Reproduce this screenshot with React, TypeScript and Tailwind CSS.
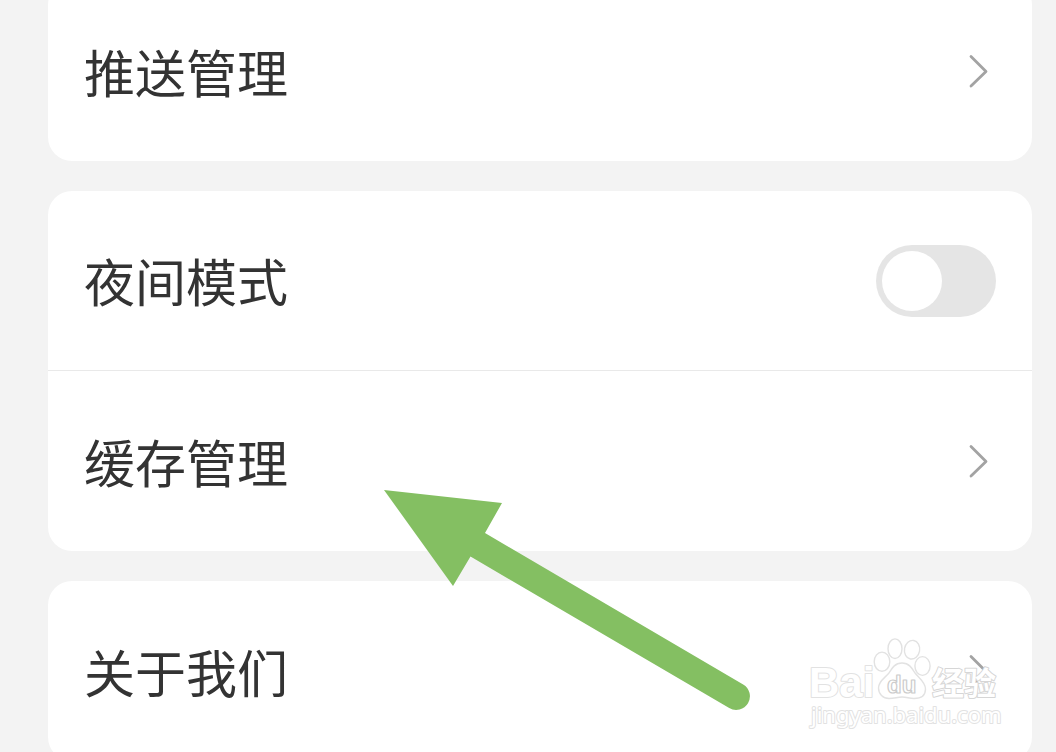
import React, { useId, useState } from "react";

function Chevron() {
  return (
    <svg className="mr-2 h-9 w-5 shrink-0" viewBox="0 0 20 36" fill="none" aria-hidden="true">
      <path
        d="M3 3.5 L18 18.5 L3 33"
        stroke="#a3a3a3"
        strokeWidth="2.8"
        strokeLinecap="round"
        strokeLinejoin="round"
      />
    </svg>
  );
}

function Card({ children }: { children: React.ReactNode }) {
  return (
    <section className="divide-y divide-[#e9e9e9] overflow-hidden rounded-3xl bg-white">{children}</section>
  );
}

function LinkRow({ label }: { label: string }) {
  return (
    <a href="#" className="flex h-[180px] items-center justify-between px-9">
      <span>{label}</span>
      <Chevron />
    </a>
  );
}

function SwitchRow({ label }: { label: string }) {
  const id = useId();
  const [on, setOn] = useState(false);
  return (
    <div className="flex h-[180px] items-center justify-between px-9">
      <label htmlFor={id}>{label}</label>
      <input
        id={id}
        type="checkbox"
        role="switch"
        checked={on}
        onChange={(e) => setOn(e.target.checked)}
        className="flex h-[72px] w-[120px] shrink-0 appearance-none items-center rounded-full bg-[#e5e5e5] px-1.5 before:h-[60px] before:w-[60px] before:rounded-full before:bg-white checked:justify-end checked:bg-[#84bf62]"
      />
    </div>
  );
}

function Pointer() {
  return (
    <svg
      className="pointer-events-none absolute left-[380px] top-[480px] h-[240px] w-[380px]"
      viewBox="380 480 380 240"
      aria-hidden="true"
    >
      <path
        d="M384 490 L502 503 L485 533 L743.2 684.4 A13.7 13.7 0 0 1 729.2 708 L470.5 556.5 L453 586 Z"
        fill="#84bf62"
      />
    </svg>
  );
}

function Watermark() {
  return (
    <svg
      className="pointer-events-none absolute bottom-4 right-12 h-[104px] w-[208px]"
      viewBox="800 632 208 104"
      fill="#ffffff"
      stroke="#e2e2e2"
      strokeLinejoin="round"
      aria-hidden="true"
    >
      <g strokeWidth="1.4">
        <ellipse cx="882" cy="661.7" rx="7.8" ry="9.6" />
        <ellipse cx="895" cy="648.7" rx="7" ry="9.8" />
        <ellipse cx="912" cy="649.7" rx="7.6" ry="9.4" transform="rotate(10 912 650)" />
        <ellipse cx="922.5" cy="666" rx="7.6" ry="9.4" />
        <path d="M902 663 C909 663 912 668 915 673 C919 678 925.5 682 925.5 689 C925.5 696 920 698.5 914 698.5 C909 698.5 907 697 902 697 C897 697 895 698.5 889 698.5 C883 698.5 878.5 694 878.5 688 C878.5 681 885 678 889 673 C892 668 895 663 902 663 Z" />
      </g>
      <text
        x="809"
        y="697"
        strokeWidth="2"
        paintOrder="stroke"
        className="font-['Liberation_Sans',sans-serif] text-[42px] font-bold"
      >
        Bai
      </text>
      <text
        x="887"
        y="693"
        stroke="#cccccc"
        strokeWidth="1.2"
        className="font-['Liberation_Sans',sans-serif] text-[24px] font-bold"
      >
        du
      </text>
      <text
        x="932"
        y="695"
        stroke="#d6d6d6"
        strokeWidth="2"
        paintOrder="stroke"
        className="font-['Noto_Sans_CJK_SC',sans-serif] text-[32px] font-bold"
      >
        经验
      </text>
      <text
        x="811"
        y="723"
        strokeWidth="2"
        paintOrder="stroke"
        className="font-['Noto_Sans',sans-serif] text-[22px]"
      >
        jingyan.baidu.com
      </text>
    </svg>
  );
}

export default function App() {
  return (
    <div className="relative h-screen overflow-hidden bg-[#f3f3f3] font-['Noto_Sans_CJK_SC',sans-serif] text-[51px] leading-none text-[#333333]">
      <main className="-mt-[19px] ml-12 mr-6 flex flex-col gap-[30px]">
        <Card>
          <LinkRow label="推送管理" />
        </Card>
        <Card>
          <SwitchRow label="夜间模式" />
          <LinkRow label="缓存管理" />
        </Card>
        <Card>
          <LinkRow label="关于我们" />
        </Card>
      </main>
      <Pointer />
      <Watermark />
    </div>
  );
}
